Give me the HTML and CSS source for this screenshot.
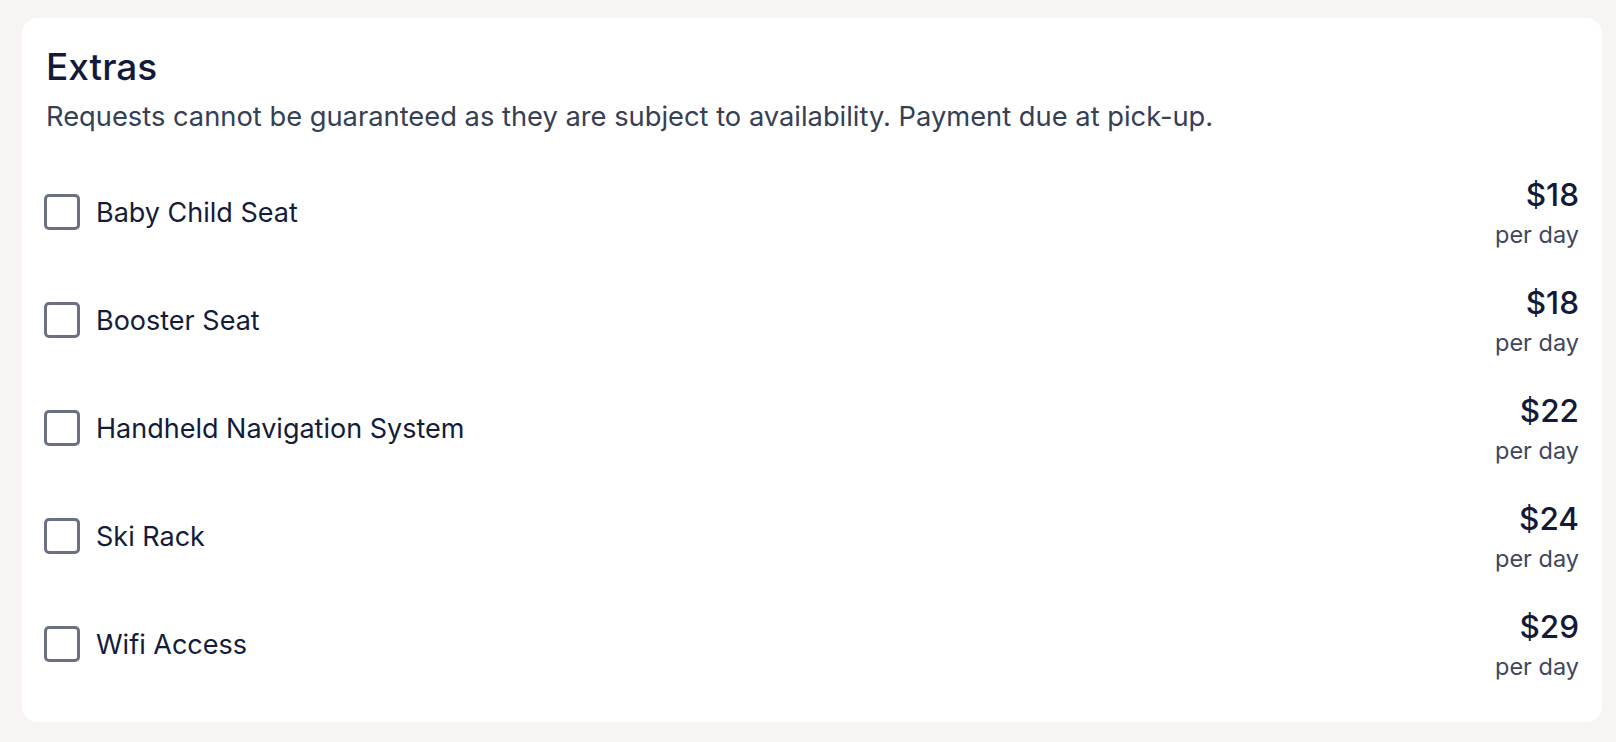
FILE: index.html
```html
<!DOCTYPE html>
<html lang="en">
<head>
  <meta charset="UTF-8">
  <meta name="viewport" content="width=device-width, initial-scale=1.0">
  <title>Extras</title>
  <link rel="stylesheet" href="styles.css">
</head>
<body>

  <div class="card">
    <h2 class="card-title">Extras</h2>
    <p class="card-subtitle">Requests cannot be guaranteed as they are subject to availability. Payment due at pick-up.</p>

    <ul class="extras">
      <li class="extra">
        <label class="extra-label">
          <input type="checkbox" class="extra-check" name="extras" value="baby-child-seat">
          <span>Baby Child Seat</span>
        </label>
        <div class="extra-price">
          <span class="amount">$18</span>
          <span class="unit">per day</span>
        </div>
      </li>
      <li class="extra">
        <label class="extra-label">
          <input type="checkbox" class="extra-check" name="extras" value="booster-seat">
          <span>Booster Seat</span>
        </label>
        <div class="extra-price">
          <span class="amount">$18</span>
          <span class="unit">per day</span>
        </div>
      </li>
      <li class="extra">
        <label class="extra-label">
          <input type="checkbox" class="extra-check" name="extras" value="navigation">
          <span>Handheld Navigation System</span>
        </label>
        <div class="extra-price">
          <span class="amount">$22</span>
          <span class="unit">per day</span>
        </div>
      </li>
      <li class="extra">
        <label class="extra-label">
          <input type="checkbox" class="extra-check" name="extras" value="ski-rack">
          <span>Ski Rack</span>
        </label>
        <div class="extra-price">
          <span class="amount">$24</span>
          <span class="unit">per day</span>
        </div>
      </li>
      <li class="extra">
        <label class="extra-label">
          <input type="checkbox" class="extra-check" name="extras" value="wifi">
          <span>Wifi Access</span>
        </label>
        <div class="extra-price">
          <span class="amount">$29</span>
          <span class="unit">per day</span>
        </div>
      </li>
    </ul>
  </div>

</body>
</html>
```

FILE: styles.css
```css
body {
  font-family: Inter, "Noto Sans", Arial, sans-serif;
  margin: 18px 14px 20px 22px;
  background-color: #f8f4f3;
  color: #0f1a38;
}

.card {
  background: white;
  border-radius: 16px;
  padding: 24px 23px 24px 24px;
}

.card-title {
  margin: 0;
  font-size: 37px;
  line-height: 50px;
  font-weight: 500;
  color: #121a38;
}

.card-subtitle {
  margin: 7px 0 0;
  font-size: 27.3px;
  line-height: 36px;
  color: #354055;
}

.extras {
  list-style: none;
  margin: 23px 0 0;
  padding: 0;
}

.extra {
  display: flex;
  align-items: center;
  justify-content: space-between;
  height: 108px;
}

.extra-label {
  display: flex;
  align-items: center;
  gap: 16px;
  font-size: 27px;
  color: #131c3a;
  cursor: pointer;
}

.extra-check {
  appearance: none;
  -webkit-appearance: none;
  width: 36px;
  height: 36px;
  margin: 0 0 0 -2px;
  border: 3px solid #6c7182;
  border-radius: 5px;
  background: white;
  cursor: pointer;
}

.extra-check:checked {
  background: #121a38;
  border-color: #121a38;
}

.extra-price {
  display: flex;
  flex-direction: column;
  align-items: flex-end;
  padding-top: 2px;
}

.amount {
  font-size: 31.5px;
  line-height: 44px;
  font-weight: 500;
  color: #121a38;
}

.unit {
  font-size: 23.5px;
  line-height: 36px;
  color: #3d475c;
}
```
